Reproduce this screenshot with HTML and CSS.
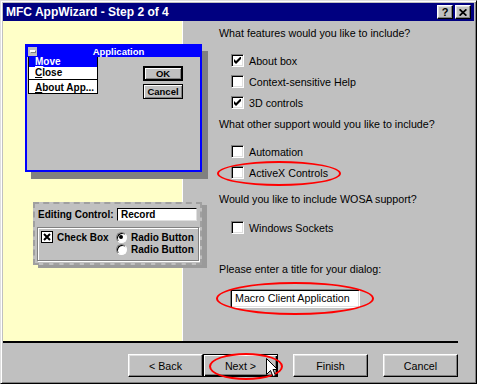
FILE: index.html
```html
<!DOCTYPE html>
<html>
<head>
    <meta charset="utf-8" />
    <title>MFC AppWizard - Step 2 of 4</title>
    <link rel="stylesheet" href="styles.css">
</head>
<body>
    <div class="dlg">
        <div class="titlebar">
            <span class="title">MFC AppWizard - Step 2 of 4</span>
            <div class="tbtns">
                <span class="tbtn">?</span>
                <span class="tbtn">
                    <svg width="8" height="7" viewBox="0 0 8 7"><path d="M0.6 0.3 L7.4 6.7 M7.4 0.3 L0.6 6.7" stroke="#000" stroke-width="1.7" fill="none"/></svg>
                </span>
            </div>
        </div>

        <div class="main">
            <div class="art">
                <!-- sample window with system menu -->
                <div class="mockwin">
                    <div class="mw-title">
                        <span class="sysbox"></span>
                        <span class="mw-caption">Application</span>
                    </div>
                    <div class="mw-body">
                        <div class="sysmenu">
                            <div class="mi sel"><u>M</u>ove</div>
                            <div class="mi"><u>C</u>lose</div>
                            <div class="msep"></div>
                            <div class="mi"><u>A</u>bout App...</div>
                        </div>
                        <div class="mw-btns">
                            <span class="mbtn def">OK</span>
                            <span class="mbtn">Cancel</span>
                        </div>
                    </div>
                </div>

                <!-- sample 3D controls -->
                <div class="editbox">
                    <div class="erow">
                        <span class="elabel">Editing Control:</span>
                        <span class="efield">Record</span>
                    </div>
                    <div class="egroup">
                        <div class="eitem">
                            <span class="xbox">
                                <svg width="8" height="8" viewBox="0 0 8 8"><path d="M1 1 L7 7 M7 1 L1 7" stroke="#000" stroke-width="2" fill="none"/></svg>
                            </span>
                            Check Box
                        </div>
                        <div class="eitem"><span class="radio on"></span>Radio Button</div>
                        <div class="eitem"></div>
                        <div class="eitem"><span class="radio"></span>Radio Button</div>
                    </div>
                </div>
            </div>

            <div class="opts">
                <div class="q">What features would you like to include?</div>
                <div class="group g1">
                    <div class="opt"><span class="cb checked"><svg width="7" height="7" viewBox="0 0 7 7"><path d="M0 2 L2 4 L7 -1 V2 L2 7 L0 5 Z" fill="#000"/></svg></span>About box</div>
                    <div class="opt"><span class="cb"></span>Context-sensitive Help</div>
                    <div class="opt"><span class="cb checked"><svg width="7" height="7" viewBox="0 0 7 7"><path d="M0 2 L2 4 L7 -1 V2 L2 7 L0 5 Z" fill="#000"/></svg></span>3D controls</div>
                </div>
                <div class="q q2">What other support would you like to include?</div>
                <div class="group g2">
                    <div class="opt"><span class="cb"></span>Automation</div>
                    <div class="opt"><span class="cb"></span>ActiveX Controls</div>
                </div>
                <div class="q q3">Would you like to include WOSA support?</div>
                <div class="group g3">
                    <div class="opt"><span class="cb"></span>Windows Sockets</div>
                </div>
                <div class="q q4">Please enter a title for your dialog:</div>
                <div class="field">Macro Client Application</div>
            </div>
        </div>

        <div class="sep"></div>

        <div class="btnrow">
            <span class="btn">&lt; Back</span>
            <span class="btn def">Next &gt;</span>
            <span class="btn spaced">Finish</span>
            <span class="btn spaced">Cancel</span>
        </div>

        <!-- hand-drawn red marks and the mouse pointer -->
        <div class="ring ring1"></div>
        <div class="ring ring2"></div>
        <div class="ring ring3"></div>
        <svg class="cursor" width="13" height="21" viewBox="0 0 13 21">
            <path d="M0.5 0.5 V16.5 L4.5 12.5 L7 18.5 L9.5 17.5 L7 11.5 H11.5 Z" fill="#fff" stroke="#000" stroke-width="1"/>
        </svg>
    </div>
</body>
</html>
```

FILE: styles.css
```css
*{
    box-sizing:border-box;
}
body{
    margin:0;
    font:10.7px "Liberation Sans", Arial, sans-serif;
    color:#000;
}
.dlg{
    position:relative;
    width:477px;
    height:384px;
    background:#c0c0c0;
    border:1px solid;
    border-color:#dfdfdf #000 #000 #dfdfdf;
    box-shadow:inset 1px 1px #fff, inset -1px -1px #808080;
    padding:2px;
    overflow:hidden;
    display:flex;
    flex-direction:column;
}
.titlebar{
    height:18px;
    flex:none;
    background:#000080;
    display:flex;
    align-items:center;
    justify-content:space-between;
    padding:0 3px;
}
.title{
    color:#fff;
    font:bold 12px "Liberation Sans", Arial, sans-serif;
}
.tbtns{
    display:flex;
    gap:2px;
}
.tbtn{
    width:16px;
    height:14px;
    background:#c0c0c0;
    border:1px solid;
    border-color:#fff #000 #000 #fff;
    box-shadow:inset -1px -1px #808080, inset 1px 1px #dfdfdf;
    display:flex;
    align-items:center;
    justify-content:center;
    font:bold 11px "Liberation Sans", Arial, sans-serif;
    line-height:1;
}

/* ---- main area ---- */
.main{
    height:320px;
    flex:none;
    display:flex;
}
.art{
    width:180px;
    flex:none;
    border-right:1px solid #fff;
    /* pale yellow stands in for the fine yellow dither */
    background:#ffffc8;
    display:flex;
    flex-direction:column;
    align-items:flex-start;
    font:bold 10px "Liberation Sans", Arial, sans-serif;
}
.mockwin{
    margin:23px 0 0 22px;
    width:177px;
    height:128px;
    flex:none;
    border:2px solid #00f;
    background:#c0c0c0;
    box-shadow:6px 7px 0 #808080;
    display:flex;
    flex-direction:column;
}
.mw-title{
    height:11px;
    flex:none;
    background:#00f;
    display:flex;
    align-items:center;
    padding-left:1px;
}
.sysbox{
    width:9px;
    height:9px;
    background:#c0c0c0;
    position:relative;
}
.sysbox::after{
    content:"";
    position:absolute;
    left:2px;
    top:3px;
    width:5px;
    height:2px;
    background:#fff;
    box-shadow:1px 1px #808080;
}
.mw-caption{
    flex:1;
    text-align:center;
    color:#fff;
    font-size:9.5px;
    line-height:11px;
}
.mw-body{
    flex:1;
    display:flex;
    align-items:flex-start;
}
.sysmenu{
    width:70px;
    margin-left:1px;
    background:#fff;
    border:1px solid #000;
    border-top:0;
}
.mi{
    height:11px;
    line-height:11px;
    padding-left:6px;
}
.mi.sel{
    height:10px;
    line-height:10px;
    background:#00f;
    color:#fff;
}
.msep{
    height:3px;
    border-top:1px solid #000;
    margin-top:1px;
}
.mw-btns{
    margin:9px 17px 0 auto;
    display:flex;
    flex-direction:column;
    gap:3px;
}
.mbtn{
    width:40px;
    height:15px;
    border:1px solid #000;
    box-shadow:inset 1px 1px #fff, inset -1px -1px #808080;
    display:flex;
    align-items:center;
    justify-content:center;
    font-size:9.5px;
}
.mbtn.def{
    border-width:2px;
}
.editbox{
    margin:30px 0 0 30px;
    width:169px;
    height:63px;
    flex:none;
    border:2px dashed #a0a0a0;
    background:#c0c0c0;
    box-shadow:5px 3px 0 #9a9a9a;
    padding:4px 1px 0 2px;
}
.erow{
    height:13px;
    display:flex;
    align-items:center;
}
.elabel{
    width:80px;
    padding-left:1px;
}
.efield{
    width:80px;
    height:13px;
    background:#fff;
    border:1px solid;
    border-color:#000 #dfdfdf #dfdfdf #000;
    padding-left:3px;
    line-height:11px;
}
.egroup{
    margin-top:6px;
    height:34px;
    border:1px solid #808080;
    box-shadow:inset 1px 1px #fff, 1px 1px #fff;
    padding:3px 0 0 3px;
    display:grid;
    grid-template-columns:75px 1fr;
    grid-auto-rows:12px;
}
.eitem{
    display:flex;
    align-items:center;
    white-space:nowrap;
}
.xbox{
    width:12px;
    height:12px;
    border:1px solid #000;
    background:#fff;
    display:flex;
    align-items:center;
    justify-content:center;
    margin-right:4px;
}
.radio{
    width:11px;
    height:11px;
    border-radius:50%;
    border:1px solid;
    border-color:#808080 #fff #fff #808080;
    background:#fff;
    box-shadow:inset 1px 1px #000;
    margin-right:4px;
    position:relative;
}
.radio.on::after{
    content:"";
    position:absolute;
    left:2px;
    top:2px;
    width:4px;
    height:4px;
    border-radius:50%;
    background:#000;
}

/* ---- options ---- */
.opts{
    flex:1;
    padding:6px 0 0 36px;
}
.q{
    height:13px;
    line-height:13px;
    white-space:nowrap;
}
.group{
    margin-top:10px;
}
.g3{
    margin-top:11px;
}
.q2{
    margin-top:5px;
}
.q3{
    margin-top:10px;
}
.q4{
    margin-top:25px;
}
.opt{
    height:21px;
    display:flex;
    align-items:center;
    padding-left:12px;
}
.cb{
    width:13px;
    height:13px;
    flex:none;
    background:#fff;
    border:1px solid;
    border-color:#808080 #fff #fff #808080;
    box-shadow:inset 1px 1px #000, inset -1px -1px #dfdfdf;
    margin-right:5px;
    display:flex;
    align-items:center;
    justify-content:center;
}
.field{
    margin:13px 0 0 11px;
    width:130px;
    height:19px;
    background:#fff;
    border:1px solid;
    border-color:#808080 #fff #fff #808080;
    box-shadow:inset 1px 1px #000, inset -1px -1px #dfdfdf;
    padding-left:4px;
    line-height:17px;
    white-space:nowrap;
}

/* ---- bottom ---- */
.sep{
    height:2px;
    flex:none;
    background:#000;
    margin-right:16px;
}
.btnrow{
    display:flex;
    justify-content:flex-end;
    padding:11px 16px 0 0;
}
.btn{
    width:75px;
    height:23px;
    border:1px solid;
    border-color:#fff #000 #000 #fff;
    box-shadow:inset -1px -1px #808080, inset 1px 1px #dfdfdf;
    display:flex;
    align-items:center;
    justify-content:center;
}
.btn.def{
    border-color:#000;
    box-shadow:inset 1px 1px #fff, inset -1px -1px #000, inset -2px -2px #808080;
}
.btn.spaced{
    margin-left:15px;
}

.ring{
    position:absolute;
    border:2px solid #f00;
    border-radius:50%;
}
.ring1{
    left:216px;
    top:160px;
    width:124px;
    height:25px;
}
.ring2{
    left:215px;
    top:281px;
    width:158px;
    height:33px;
}
.ring3{
    left:208px;
    top:352px;
    width:74px;
    height:27px;
}
.cursor{
    position:absolute;
    left:265px;
    top:357px;
}
```
